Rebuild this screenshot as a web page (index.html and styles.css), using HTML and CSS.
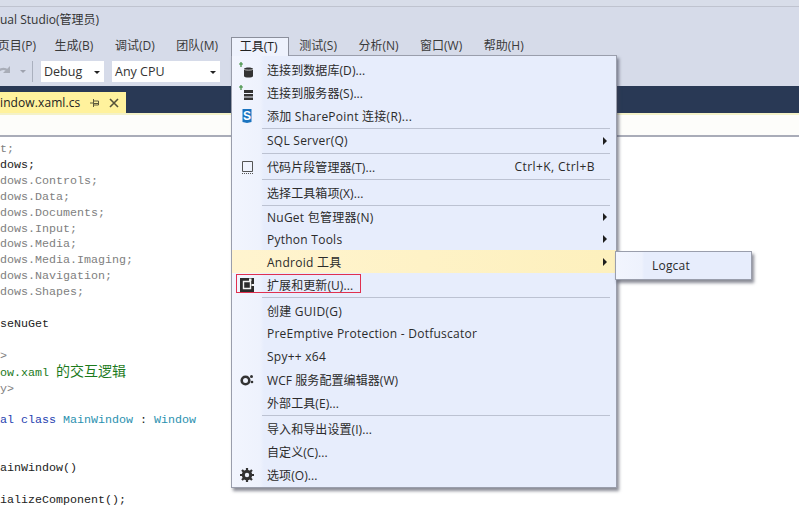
FILE: index.html
```html
<!DOCTYPE html>
<html lang="zh-CN">
<head>
<meta charset="utf-8">
<title>Visual Studio</title>
<link rel="stylesheet" href="styles.css">
</head>
<body>
<div class="app">
  <div class="titlebar">ual Studio(管理员)</div>
  <nav class="menubar">
    <span class="mi mi-first">页目(P)</span>
    <span class="mi">生成(B)</span>
    <span class="mi">调试(D)</span>
    <span class="mi">团队(M)</span>
    <span class="mi mi-open">工具(T)</span>
    <span class="mi">测试(S)</span>
    <span class="mi">分析(N)</span>
    <span class="mi">窗口(W)</span>
    <span class="mi">帮助(H)</span>
  </nav>
  <div class="toolbar">
    <svg class="redo" width="12" height="14" viewBox="0 0 12 14"><path d="M-3 11C-3 4 4 2 8 6" fill="none" stroke="#a9adb8" stroke-width="2.200"/><path d="M10 1v7H3z" fill="#a9adb8"/></svg>
    <span class="tb-caret"></span>
    <span class="tb-sep"></span>
    <div class="combo combo-debug"><span>Debug</span><i class="caret"></i></div>
    <div class="combo combo-cpu"><span>Any CPU</span><i class="caret"></i></div>
  </div>
  <div class="tabbar">
    <div class="tab">
      <span class="tab-name">indow.xaml.cs</span>
      <svg class="pin" width="10" height="10" viewBox="0 0 10 10"><path d="M0 5h3M3.500 1v8M3.500 3h5v4h-5M3.500 5.500h5" fill="none" stroke="#5d5a3c" stroke-width="1"/></svg>
      <svg class="close" width="10" height="10" viewBox="0 0 10 10"><path d="M1 1l8 8M9 1l-8 8" stroke="#55523a" stroke-width="1.600"/></svg>
    </div>
  </div>
  <div class="tabline"></div>
  <div class="navstrip"></div>
  <pre class="code"><span class="g">t;</span>
dows;
<span class="g">dows.Controls;</span>
<span class="g">dows.Data;</span>
<span class="g">dows.Documents;</span>
<span class="g">dows.Input;</span>
<span class="g">dows.Media;</span>
<span class="g">dows.Media.Imaging;</span>
<span class="g">dows.Navigation;</span>
<span class="g">dows.Shapes;</span>

seNuGet

<span class="g">&gt;</span>
<span class="c">ow.xaml <span class="zh">的交互逻辑</span></span>
<span class="g">y&gt;</span>

<span class="k">al class</span> <span class="t">MainWindow</span> : <span class="t">Window</span>


ainWindow()

ializeComponent();</pre>

  <div class="menu">
    <div class="row"><span class="ico"><svg width="16" height="16" viewBox="0 0 16 16"><path d="M2 0v5M0 2h4" stroke="#3c8c3c" stroke-width="1.200"/><path d="M5 7c0-2 9-2 9 0v7c0 2-9 2-9 0z" fill="#333"/><path d="M5 7c0 1.500 9 1.500 9 0" fill="none" stroke="#ddd" stroke-width=".8"/></svg></span><span class="lbl">连接到数据库(D)...</span></div>
    <div class="row"><span class="ico"><svg width="16" height="16" viewBox="0 0 16 16"><path d="M2 0v5M0 2h4" stroke="#3c8c3c" stroke-width="1.200"/><path d="M5 5h9v3H5zM5 9h9v2.500H5zM5 12.500h9V15H5z" fill="#333"/></svg></span><span class="lbl">连接到服务器(S)...</span></div>
    <div class="row"><span class="ico"><svg width="16" height="16" viewBox="0 0 16 16"><path d="M3.500 1h9v13l-4.500 1-4.500-1z" fill="#1a74c0"/><text class="s-glyph" x="8" y="12" text-anchor="middle">S</text></svg></span><span class="lbl lat">添加 SharePoint 连接(R)...</span></div>
    <div class="sep sep-first"></div>
    <div class="row"><span class="ico"></span><span class="lbl lat">SQL Server(Q)</span><i class="arrow"></i></div>
    <div class="sep"></div>
    <div class="row"><span class="ico"><svg width="16" height="16" viewBox="0 0 16 16"><path d="M3.500 2.500h10v10h-10z" fill="none" stroke="#555"/><path d="M3 14.500h11" stroke="#555" stroke-dasharray="1 1"/></svg></span><span class="lbl">代码片段管理器(T)...</span><span class="key">Ctrl+K, Ctrl+B</span></div>
    <div class="sep"></div>
    <div class="row"><span class="ico"></span><span class="lbl">选择工具箱项(X)...</span></div>
    <div class="sep sep-tight"></div>
    <div class="row row-tight"><span class="ico"></span><span class="lbl lat">NuGet 包管理器(N)</span><i class="arrow"></i></div>
    <div class="row row-tight"><span class="ico"></span><span class="lbl lat">Python Tools</span><i class="arrow"></i></div>
    <div class="row row-hot"><span class="ico"></span><span class="lbl lat">Android 工具</span><i class="arrow"></i></div>
    <div class="row"><span class="ico"><svg width="16" height="16" viewBox="0 0 16 16"><path d="M1 1h14v14H1z" fill="#2b2b2b"/><path d="M4.500 4.500h7v7h-7z" fill="none" stroke="#f2f2f2" stroke-width="1.400"/><path d="M10 1.500h2.500V4H10zM12.500 7H15v2h-2.500z" fill="#f2f2f2"/></svg></span><span class="lbl">扩展和更新(U)...</span><div class="mark"></div></div>
    <div class="sep"></div>
    <div class="row"><span class="ico"></span><span class="lbl lat">创建 GUID(G)</span></div>
    <div class="row"><span class="ico"></span><span class="lbl lat">PreEmptive Protection - Dotfuscator</span></div>
    <div class="row"><span class="ico"></span><span class="lbl lat">Spy++ x64</span></div>
    <div class="row"><span class="ico"><svg width="16" height="16" viewBox="0 0 16 16"><circle cx="6.500" cy="8.500" r="3.800" fill="none" stroke="#333" stroke-width="2.600"/><circle cx="12.500" cy="4.500" r="1.500" fill="#333"/><circle cx="13" cy="10" r="1.300" fill="#333"/></svg></span><span class="lbl">WCF 服务配置编辑器(W)</span></div>
    <div class="row"><span class="ico"></span><span class="lbl">外部工具(E)...</span></div>
    <div class="sep"></div>
    <div class="row"><span class="ico"></span><span class="lbl">导入和导出设置(I)...</span></div>
    <div class="row"><span class="ico"></span><span class="lbl">自定义(C)...</span></div>
    <div class="row"><span class="ico"><svg width="16" height="16" viewBox="0 0 16 16"><circle cx="8" cy="8" r="3.800" fill="none" stroke="#333" stroke-width="2.800"/><path d="M8 1v14M1 8h14M3 3l10 10M13 3L3 13" stroke="#333" stroke-width="2.200"/><circle cx="8" cy="8" r="2.200" fill="#eef2fc"/></svg></span><span class="lbl">选项(O)...</span></div>
  </div>

  <div class="submenu"><span>Logcat</span></div>
</div>
</body>
</html>
```
FILE: styles.css
```css
html, body {
  margin: 0;
  padding: 0;
}
body {
  width: 799px;
  height: 508px;
  overflow: hidden;
  background: #fff;
}
.app {
  position: relative;
  width: 799px;
  height: 508px;
  overflow: hidden;
  background: #fff;
  font-family: "Open Sans", "Noto Sans CJK SC", sans-serif;
  font-size: 12px;
  color: #2a2a2a;
}
.titlebar {
  height: 33px;
  box-shadow: inset 0 6px 0 #d8dde9, inset 0 7px 0 #bfc3cf;
  background: #d6dbe9;
  line-height: 40px;
  color: #333;
}
.menubar {
  display: flex;
  height: 24px;
  align-items: flex-start;
  padding-top: 4px;
  box-sizing: border-box;
  background: #d6dbe9;
  color: #3a3a3a;
}
.mi {
  padding: 0 10.750px;
  line-height: 18px;
  white-space: nowrap;
}
.mi-first {
  margin-left: -13px;
  margin-right: -3px;
}
.mi-open {
  position: relative;
  z-index: 3;
  margin-left: 2px;
  padding: 0 10px 0 8px;
  height: 18px;
  border: 1px solid #8b8f9c;
  border-bottom: 0;
  background: #eef2fd;
  color: #222;
}
.toolbar {
  display: flex;
  align-items: center;
  height: 29px;
  background: #d6dbe9;
}
.tb-caret {
  margin-left: 8px;
  border: 3px solid transparent;
  border-top: 3px solid #9ea2ae;
  border-bottom: 0;
}
.tb-sep {
  width: 1px;
  height: 21px;
  margin: 0 8px 0 6px;
  background: #aab0be;
}
.combo {
  display: flex;
  align-items: center;
  justify-content: space-between;
  box-sizing: border-box;
  height: 21px;
  padding: 0 4px 0 3px;
  background: #fff;
  color: #333;
  font-size: 12.500px;
}
.combo-debug {
  width: 63px;
  margin-right: 8px;
}
.combo-cpu {
  width: 108px;
}
.caret {
  margin-top: 2px;
  border: 3px solid transparent;
  border-top: 3px solid #222;
  border-bottom: 0;
}
.tabbar {
  height: 27px;
  background: #293955;
  display: flex;
  align-items: flex-end;
}
.tab {
  display: flex;
  align-items: center;
  width: 126px;
  height: 21px;
  background: #fff29d;
  color: #222;
  font-size: 12px;
  letter-spacing: .1px;
  white-space: nowrap;
}
.tab-name {
  width: 90px;
}
.pin { margin-right: 9px; }
.tabline {
  height: 2px;
  background: #f4f2c8;
}
.navstrip {
  height: 20px;
  background: #fdfdfa;
  border-bottom: 2px solid #a9acb8;
}
.code {
  margin: 0;
  padding: 5px 0 0 0;
  font-family: "Liberation Mono", "Noto Sans CJK SC", monospace;
  font-size: 11.670px;
  line-height: 15.900px;
  color: #222;
  white-space: pre;
}
.g { color: #808080; }
.c { color: #1c7a1c; }
.zh { font-size: 14px; line-height: 1; }
.k { color: #1f3fb0; }
.t { color: #2b91af; }

.menu {
  position: absolute;
  z-index: 2;
  left: 231px;
  top: 55px;
  width: 386px;
  height: 433px;
  box-sizing: border-box;
  padding-top: 2px;
  border: 1px solid #9a9eac;
  background: linear-gradient(90deg, #f2f5fe 0, #eef2fd 28px, #e7edfc 32px, #e7edfc 100%);
  box-shadow: 2px 3px 3px rgba(60, 64, 80, .6);
  color: #2b2b2b;
}
.row {
  position: relative;
  display: flex;
  align-items: center;
  height: 23px;
  white-space: nowrap;
}
.row-tight {
  height: 22px;
}
.row-hot {
  background: linear-gradient(90deg, #fff4cf, #fdf0bd);
}
.ico {
  display: flex;
  align-items: center;
  justify-content: center;
  width: 29px;
  margin-right: 6px;
}
.s-glyph {
  font-family: "Liberation Sans", sans-serif;
  font-size: 12px;
  font-weight: 700;
  fill: #fff;
}
.lbl {
  flex: 1;
  letter-spacing: .08px;
}
.lat {
  letter-spacing: .25px;
}
.key {
  margin-right: 21px;
  letter-spacing: .42px;
}
.arrow {
  position: absolute;
  right: 9px;
  top: 50%;
  margin-top: -4px;
  border: 4px solid transparent;
  border-left: 4px solid #1e1e1e;
  border-right: 0;
}
.sep {
  height: 1px;
  margin: 1px 6px 1px 30px;
  background: #bcc2d2;
}
.sep-first {
  margin-bottom: 0;
}
.sep-tight {
  margin-bottom: 0;
}
.mark {
  position: absolute;
  left: 4px;
  top: 1px;
  width: 125px;
  height: 19px;
  box-sizing: border-box;
  border: 1px solid #e0304f;
}
.submenu {
  position: absolute;
  z-index: 4;
  left: 615px;
  top: 251px;
  width: 137px;
  height: 29px;
  box-sizing: border-box;
  display: flex;
  align-items: center;
  padding-left: 36px;
  border: 1px solid #9a9eac;
  background: linear-gradient(90deg, #f2f5fe 0, #eef2fd 26px, #e7edfc 28px);
  box-shadow: 2px 3px 3px rgba(60, 64, 80, .6);
  color: #2b2b2b;
  letter-spacing: .2px;
}
```
